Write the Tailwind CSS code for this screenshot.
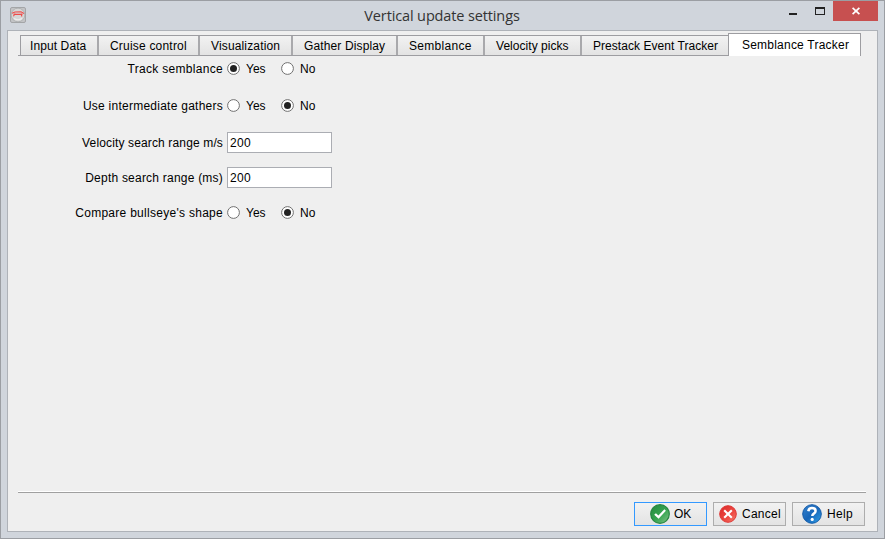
<!DOCTYPE html>
<html lang="en">
<head>
<meta charset="utf-8">
<title>Vertical update settings</title>
<script src="https://cdn.jsdelivr.net/npm/@tailwindcss/browser@4"></script>
</head>
<body class="overflow-hidden font-['Liberation_Sans',Arial,sans-serif] text-[12px] leading-[14px] text-black">
<div class="flex h-[539px] w-[885px] flex-col border border-[#9b9ea3] bg-[#d0d5dc] pr-[6px] pb-[6px] pl-[6px]">
  <header class="grid h-[29px] shrink-0 grid-cols-[120px_1fr_120px]">
    <svg class="mt-[6px] ml-[3px] size-4" viewBox="0 0 16 16">
      <rect x=".5" y=".5" width="15" height="15" rx="1.5" fill="#c3c4c6" stroke="#a3a5a7"/>
      <circle cx="8" cy="8" r="6.8" fill="#d6d6d6" stroke="#a0a2a4" stroke-width=".6"/>
      <path d="M4 11.5q4 2.5 8 0" fill="none" stroke="#eee" stroke-width="1.2"/>
      <path d="M2 6.3 5 5l6-.3 3 1.8M3.5 7.4h9M5.2 6.5 3.4 9.2M11 6.5l.9 3" fill="none" stroke="#ee4d4b" stroke-width="1.1"/>
    </svg>
    <h1 class="pt-[5px] pr-px text-center font-['Open_Sans','Noto_Sans',sans-serif] text-[14.5px] leading-5 tracking-[-0.13px] text-[#333]">Vertical update settings</h1>
    <div class="flex justify-end">
      <div class="flex w-[29px] pt-[12px] pl-px"><span class="h-[2px] w-2 bg-[#222]"></span></div>
      <div class="flex w-[16px] pt-[6px]"><span class="-ml-[2px] h-2 w-[10px] shrink-0 border border-t-2 border-[#222]"></span></div>
      <div class="flex h-5 w-[45px] items-center justify-center bg-[#c75050]">
        <svg class="size-[8px]" viewBox="0 0 8 8"><path d="m.6.8 6.8 6.4M7.4.8.6 7.2" stroke="#fff" stroke-width="1.7"/></svg>
      </div>
    </div>
  </header>
  <main class="flex w-[871px] grow flex-col border border-[#aeb2b8] bg-[#efefef] pr-[11px] pl-[10px]">
    <nav class="flex h-[25px] items-end whitespace-nowrap">
      <span class="h-px w-[2px] bg-[#9d9da1]"></span>
      <div class="flex h-[21px] border border-r-0 border-[#9d9da1] bg-linear-to-b from-[#f2f2f2] to-[#e3e3e3]">
        <div class="w-[78px] border-r-2 border-[#a9a9ac] pt-[3px] pl-[9px] tracking-[0.1px]">Input Data</div>
        <div class="w-[101px] border-r-2 border-[#a9a9ac] pt-[3px] pl-[11px] tracking-[0.2px]">Cruise control</div>
        <div class="w-[93px] border-r-2 border-[#a9a9ac] pt-[3px] pl-[11px] tracking-[0.15px]">Visualization</div>
        <div class="w-[105px] border-r-2 border-[#a9a9ac] pt-[3px] pl-[11px] tracking-[0.13px]">Gather Display</div>
        <div class="w-[87px] border-r-2 border-[#a9a9ac] pt-[3px] pl-[11px] tracking-[0.3px]">Semblance</div>
        <div class="w-[97px] border-r-2 border-[#a9a9ac] pt-[3px] pl-[11px] tracking-[0.04px]">Velocity picks</div>
        <div class="w-[146px] pt-[3px] pl-[11px] tracking-[0.05px]">Prestack Event Tracker</div>
      </div>
      <div class="h-[23px] w-[133px] border border-b-0 border-[#9d9da1] bg-white pt-[4px] pl-[13px] tracking-[0.22px]">Semblance Tracker</div>
    </nav>
    <form class="grid grow grid-cols-[205px_110px] grid-rows-[31px_42px_33px_37px_33px] content-start gap-x-[4px] whitespace-nowrap">
      <label class="pt-[6px] text-right tracking-[0.3px]">Track semblance</label>
      <div class="flex gap-[5px] pt-[6px]">
        <svg class="size-[13px]" viewBox="0 0 13 13"><circle cx="6.5" cy="6.5" r="5.9" fill="#fff" stroke="#707070"/><circle cx="6.5" cy="6.5" r="3.5" fill="#222"/></svg><span class="w-[31px] pl-px">Yes</span>
        <svg class="size-[13px]" viewBox="0 0 13 13"><circle cx="6.5" cy="6.5" r="5.9" fill="#fff" stroke="#707070"/></svg><span class="pl-px">No</span>
      </div>
      <label class="pt-[12px] text-right tracking-[0.25px]">Use intermediate gathers</label>
      <div class="flex gap-[5px] pt-[12px]">
        <svg class="size-[13px]" viewBox="0 0 13 13"><circle cx="6.5" cy="6.5" r="5.9" fill="#fff" stroke="#707070"/></svg><span class="w-[31px] pl-px">Yes</span>
        <svg class="size-[13px]" viewBox="0 0 13 13"><circle cx="6.5" cy="6.5" r="5.9" fill="#fff" stroke="#707070"/><circle cx="6.5" cy="6.5" r="3.5" fill="#222"/></svg><span class="pl-px">No</span>
      </div>
      <label class="pt-[7px] text-right tracking-[0.14px]">Velocity search range m/s</label>
      <div class="pt-[3px]"><input class="block h-[21px] w-[105px] border border-[#abadb3] bg-white px-[2px] tracking-[0.3px]" value="200"></div>
      <label class="pt-[9px] text-right tracking-[0.22px]">Depth search range (ms)</label>
      <div class="pt-[5px]"><input class="block h-[21px] w-[105px] border border-[#abadb3] bg-white px-[2px] tracking-[0.3px]" value="200"></div>
      <label class="pt-[7px] text-right tracking-[0.28px]">Compare bullseye's shape</label>
      <div class="flex gap-[5px] pt-[7px]">
        <svg class="size-[13px]" viewBox="0 0 13 13"><circle cx="6.5" cy="6.5" r="5.9" fill="#fff" stroke="#707070"/></svg><span class="w-[31px] pl-px">Yes</span>
        <svg class="size-[13px]" viewBox="0 0 13 13"><circle cx="6.5" cy="6.5" r="5.9" fill="#fff" stroke="#707070"/><circle cx="6.5" cy="6.5" r="3.5" fill="#222"/></svg><span class="pl-px">No</span>
      </div>
    </form>
    <footer class="h-[40px] shrink-0 border-t border-white">
      <div class="flex h-[34px] justify-end gap-[6px] border-t border-[#a0a0a0] pt-[9px] pr-px">
        <button class="flex h-6 w-[73px] items-center border border-[#3399ff] bg-linear-to-b from-[#f2f2f2] to-[#e3e3e3] pl-[15px]">
          <svg class="mr-[4px] size-5" viewBox="0 0 20 20"><defs><linearGradient id="g" x2="1" y2="1"><stop stop-color="#218a3c"/><stop offset=".55" stop-color="#38a551"/><stop offset="1" stop-color="#85c58a"/></linearGradient></defs><circle cx="10" cy="10" r="9.3" fill="url(#g)" stroke="#278640" stroke-width="1.2"/><path d="m4.2 10.8 1.7-1.5 2.5 2.3 6-6.3 1.5 1.4-7.3 8z" fill="#fff"/></svg>OK
        </button>
        <button class="flex h-6 w-[73px] items-center border border-[#adadad] bg-linear-to-b from-[#f2f2f2] to-[#e3e3e3] pl-[5px] tracking-[0.25px]">
          <svg class="mr-[5px] size-[18px]" viewBox="0 0 18 18"><defs><linearGradient id="r" x2="1" y2="1"><stop stop-color="#da2929"/><stop offset=".6" stop-color="#ed4a42"/><stop offset="1" stop-color="#f58070"/></linearGradient></defs><circle cx="9" cy="9" r="8.3" fill="url(#r)" stroke="#df3432"/><path d="m5.2 5.2 7.6 7.6M12.8 5.2l-7.6 7.6" stroke="#fff" stroke-width="2.1"/></svg>Cancel
        </button>
        <button class="flex h-6 w-[73px] items-center border border-[#adadad] bg-linear-to-b from-[#f2f2f2] to-[#e3e3e3] pl-[9px] tracking-[0.3px]">
          <svg class="mr-[5px] size-5" viewBox="0 0 20 20"><defs><linearGradient id="b" x2="1" y2="1"><stop stop-color="#3684cf"/><stop offset=".5" stop-color="#1866b9"/><stop offset="1" stop-color="#2fa2e9"/></linearGradient></defs><circle cx="10" cy="10" r="9.3" fill="url(#b)" stroke="#155ba8"/><path d="M6.3 7.2Q6.8 4.1 10 4.1q3.6 0 3.6 2.9 0 1.5-1.8 2.6-1.5.9-1.5 2.5" fill="none" stroke="#fff" stroke-width="2.5"/><circle cx="10.2" cy="15.4" r="1.6" fill="#fff"/></svg>Help
        </button>
      </div>
    </footer>
  </main>
</div>
</body>
</html>
